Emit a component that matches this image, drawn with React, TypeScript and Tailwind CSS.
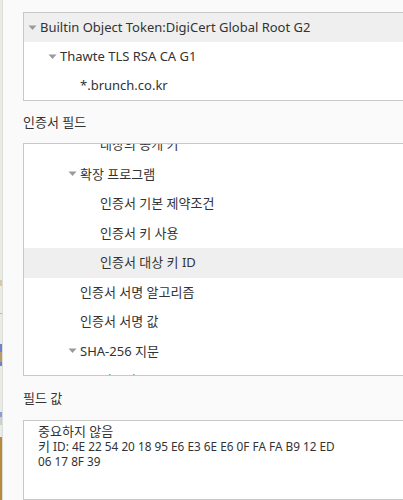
import React from "react";

const Tri = () => (
  <svg width="9" height="6" viewBox="0 0 9 6" className="shrink-0">
    <path d="M0.5 0.5 L8.5 0.5 L4.5 5 Z" fill="#9a9a9a" />
  </svg>
);

type Row = { text: string; level: number; expander?: boolean; selected?: boolean };

const TreeRow = ({ r, h }: { r: Row; h: string }) => (
  <div
    className={`flex items-center whitespace-nowrap ${h} ${r.selected ? "bg-[#efefef]" : ""}`}
    style={{ paddingLeft: 4 + r.level * 20 }}
  >
    <div className="flex w-[12px] shrink-0 items-center">{r.expander ? <Tri /> : null}</div>
    <span>{r.text}</span>
  </div>
);

const top: Row[] = [
  { text: "Builtin Object Token:DigiCert Global Root G2", level: 0, expander: true, selected: true },
  { text: "Thawte TLS RSA CA G1", level: 1, expander: true },
  { text: "*.brunch.co.kr", level: 2 },
];

const fields: Row[] = [
  { text: "대상의 공개 키", level: 3 },
  { text: "확장 프로그램", level: 2, expander: true },
  { text: "인증서 기본 제약조건", level: 3 },
  { text: "인증서 키 사용", level: 3 },
  { text: "인증서 대상 키 ID", level: 3, selected: true },
  { text: "인증서 서명 알고리즘", level: 2 },
  { text: "인증서 서명 값", level: 2 },
  { text: "SHA-256 지문", level: 2, expander: true },
  { text: "인증서", level: 3 },
];

export default function App() {
  return (
    <div
      className="flex h-[500px] w-[403px] overflow-hidden bg-[#fafafa] text-[13px] text-[#333333]"
      style={{ fontFamily: '"Noto Sans", "Noto Sans CJK KR", sans-serif' }}
    >
      <div className="flex h-full w-[3px] shrink-0 flex-col border-r border-[#dcdfd8] bg-[#e9ece6]">
        <div className="h-[280px]" />
        <div className="h-[6px] bg-[#d8c8a8]" />
        <div className="h-[27px]" />
        <div className="h-[1px] bg-[#b8b8b8]" />
        <div className="h-[30px]" />
        <div className="h-[8px] bg-[#6d82c8]" />
        <div className="h-[10px] bg-[#b99b6a]" />
        <div className="h-[4px] bg-[#6d82c8]" />
        <div className="h-[46px]" />
        <div className="h-[5px] bg-[#8b9bd6]" />
        <div className="h-[8px] bg-[#d0d0d0]" />
        <div className="h-[12px]" />
        <div className="flex-1 bg-[#b58a3e]" />
      </div>
      <div className="flex min-w-0 flex-1 flex-col pl-[20px]">
        <div className="mt-[12px] mr-[-4px] h-[89px] overflow-hidden border border-[#c8c8c8] bg-white">
          {top.map((r, i) => (
            <TreeRow key={i} r={r} h="h-[29px]" />
          ))}
        </div>
        <div className="flex h-[42px] items-center pt-[2px]">인증서 필드</div>
        <div className="mr-[-4px] h-[233px] overflow-hidden border border-[#c8c8c8] bg-white">
          <div className="-mt-[14px]">
            {fields.map((r, i) => (
              <TreeRow key={i} r={r} h="h-[29.5px]" />
            ))}
          </div>
        </div>
        <div className="flex h-[44px] items-center pt-[1px]">필드 값</div>
        <div className="mr-[-4px] flex-1 border border-[#c8c8c8] bg-white pl-[14px] pt-[3px] leading-[15px]">
          <div>중요하지 않음</div>
          <div>
            키<span className="text-[11.8px]"> ID: 4E 22 54 20 18 95 E6 E3 6E E6 0F FA FA B9 12 ED</span>
          </div>
          <div className="text-[11.8px]">06 17 8F 39</div>
        </div>
      </div>
    </div>
  );
}
